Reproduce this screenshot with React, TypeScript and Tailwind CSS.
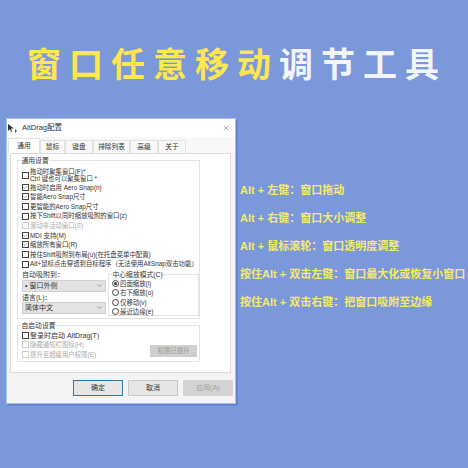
import React from 'react';
import { ChevronDown, Check, X } from 'lucide-react';

const CJK = "font-['Liberation_Sans','Noto_Sans_CJK_SC',sans-serif]";

const tabs = [
  { name: '通用', w: 'w-[32px]' },
  { name: '鼠标', w: 'w-[25px]' },
  { name: '键盘', w: 'w-[28px]' },
  { name: '排除列表', w: 'w-[37px]' },
  { name: '高级', w: 'w-[28px]' },
  { name: '关于', w: 'w-[28px]' },
];

const hints = [
  'Alt + 左键：窗口拖动',
  'Alt + 右键：窗口大小调整',
  'Alt + 鼠标滚轮：窗口透明度调整',
  '按住Alt + 双击左键：窗口最大化或恢复小窗口',
  '按住Alt + 双击右键：把窗口吸附至边缘',
];

function Box({ label, checked, disabled, tall }: { label: React.ReactNode; checked?: boolean; disabled?: boolean; tall?: boolean }) {
  return (
    <div className={`flex items-center gap-[1px] ${tall ? 'h-[15px]' : 'h-[9.6px]'} ${disabled ? 'text-[#ababab]' : 'text-[#333]'}`}>
      <span className={`flex h-[7px] w-[7px] shrink-0 items-center justify-center border-[0.6px] bg-white ${disabled ? 'border-[#cdcdcd]' : 'border-[#444]'}`}>
        {checked && <Check size={7} strokeWidth={2} className="text-[#333]" />}
      </span>
      <span className="whitespace-nowrap leading-[7.5px]">{label}</span>
    </div>
  );
}

function Radio({ label, on }: { label: string; on?: boolean }) {
  return (
    <div className="flex h-[9.4px] items-center gap-[1px]">
      <span className="flex h-[7px] w-[7px] items-center justify-center rounded-full border-[0.6px] border-[#444] bg-white">
        {on && <span className="h-[3.5px] w-[3.5px] rounded-full bg-[#333]" />}
      </span>
      <span className="whitespace-nowrap">{label}</span>
    </div>
  );
}

function Combo({ value }: { value: string }) {
  return (
    <div className="flex h-[12px] w-[84px] items-center justify-between border-[0.6px] border-[#cfcfcf] bg-[#e3e3e3] px-[2px] text-[7px] text-[#333]">
      <span>{value}</span>
      <ChevronDown size={7} className="text-[#666]" />
    </div>
  );
}

function Group({ title, className, children }: { title: string; className?: string; children: React.ReactNode }) {
  return (
    <div className={`relative border-[0.6px] border-[#e4e4e4] ${className ?? ''}`}>
      <span className="absolute left-[3px] top-[-4px] bg-white px-[0.5px] text-[6.8px] leading-[8px] text-[#333]">{title}</span>
      {children}
    </div>
  );
}

function DialogWindow() {
  return (
    <div className="flex h-[286px] w-[230px] shrink-0 flex-col border-[1.5px] border-[#a8c3ec] bg-[#f4f4f4] text-[6.4px] text-[#333] shadow-[1.5px_1.5px_0_#5f7fc4]">
      <div className="flex h-[18px] shrink-0 items-center justify-between bg-white pl-[1px] pr-[5px] text-[7.5px]">
        <span className="flex items-center gap-[4px]">
          <svg width="10" height="9" viewBox="0 0 10 9">
            <path d="M0 0v7l2-2 1 3 1-.5-1-3h3z" fill="#333" />
            <path d="M7 5l2 2-2 2z" fill="#555" />
          </svg>
          AltDrag配置
        </span>
        <X size={8} strokeWidth={1.3} className="text-[#444]" />
      </div>
      <div className="flex h-[16px] shrink-0 items-end bg-[#f8f8f8] pl-[1px] text-[6.7px]">
        {tabs.map((t, i) => (
          <div
            key={t.name}
            className={`flex items-center justify-center border-[0.6px] border-b-0 border-[#e2e2e2] ${t.w} ${i === 0 ? 'h-[15px] bg-white' : 'h-[13px] bg-[#f8f8f8]'}`}
          >
            {t.name}
          </div>
        ))}
      </div>
      <div className="ml-[2.5px] flex h-[220px] w-[221px] shrink-0 flex-col gap-[6px] border-[0.6px] border-[#dcdcdc] bg-white pl-[6.5px] pt-[5.5px]">
        <Group title="通用设置" className="h-[159px] w-[183px] shrink-0 pl-[4px] pt-[7px]">
          <Box tall label={<span className="block">拖动时聚集窗口(F)*<br />Ctrl 键也可以聚集窗口 *</span>} />
          <Box checked label="拖动时启用 Aero Snap(n)" />
          <Box checked label="智能Aero Snap尺寸" />
          <Box label="更智能的Aero Snap尺寸" />
          <Box label="按下Shift以同时缩放吸附的窗口(z)" />
          <Box disabled label="滚动非活动窗口(S)" />
          <Box checked label="MDI 支持(M)" />
          <Box checked label="缩放所有窗口(R)" />
          <Box label="按住Shift吸附到布局(u)(在托盘菜单中配置)" />
          <div className="w-[177px] overflow-hidden">
            <Box label="Alt+鼠标点击穿透到目标程序（无法使用AltSnap双击功能）" />
          </div>
          <div className="flex gap-[2px] pt-[1px]">
            <div className="flex flex-col">
              <span className="h-[10px] text-[7px] leading-[9px]">自动吸附到：</span>
              <Combo value="• 窗口外侧" />
              <span className="h-[10px] pt-[1px] text-[7px] leading-[9px]">语言(L)：</span>
              <Combo value="简体中文" />
            </div>
            <Group title="中心缩放模式(C)" className="mt-[4px] h-[42px] w-[91px] pl-[3px] pt-[4px]">
              <Radio on label="四面缩放(l)" />
              <Radio label="右下缩放(o)" />
              <Radio label="仅移动(v)" />
              <Radio label="最近边缘(e)" />
            </Group>
          </div>
        </Group>
        <Group title="自启动设置" className="h-[37px] w-[183px] shrink-0 pl-[4px] pt-[5px]">
          <div className="text-[7px]"><Box label="登录时启动 AltDrag(T)" /></div>
          <Box disabled label="隐藏通知栏图标(H)" />
          <Box disabled label="提升至超级用户权限(E)" />
          <div className="absolute bottom-[4px] right-[2px] flex h-[12px] w-[47px] items-center justify-center bg-[#cfcfcf] text-[#999]">权限已提升</div>
        </Group>
      </div>
      <div className="flex flex-1 items-center justify-end gap-[5px] pr-[2px] text-[7px]">
        <div className="flex h-[16px] w-[50px] items-center justify-center border border-[#2f79b5] bg-[#e6e6e6]">确定</div>
        <div className="flex h-[16px] w-[50px] items-center justify-center border-[0.6px] border-[#c8c8c8] bg-[#e6e6e6]">取消</div>
        <div className="flex h-[16px] w-[50px] items-center justify-center border-[0.6px] border-[#d5d5d5] bg-[#d4d4d4] text-[#a0a0a0]">应用(A)</div>
      </div>
    </div>
  );
}

export default function App() {
  return (
    <div className={`flex h-[468px] w-[468px] flex-col overflow-hidden bg-[#7b98da] ${CJK}`}>
      <h1 className="flex h-[118px] shrink-0 items-start pl-[27px] pt-[45px] text-[34px] font-bold leading-[40px] tracking-[8px]">
        <span className="text-[#fde64f]">窗口任意移动</span>
        <span className="text-[#f2f5fc]">调节工具</span>
      </h1>
      <div className="flex gap-[4px] pl-[6px]">
        <DialogWindow />
        <ul className="flex flex-col gap-[14px] pt-[65px] text-[11px] font-bold leading-[14px] text-[#f5ea6c]">
          {hints.map((h) => (
            <li key={h} className="whitespace-nowrap">{h}</li>
          ))}
        </ul>
      </div>
    </div>
  );
}
